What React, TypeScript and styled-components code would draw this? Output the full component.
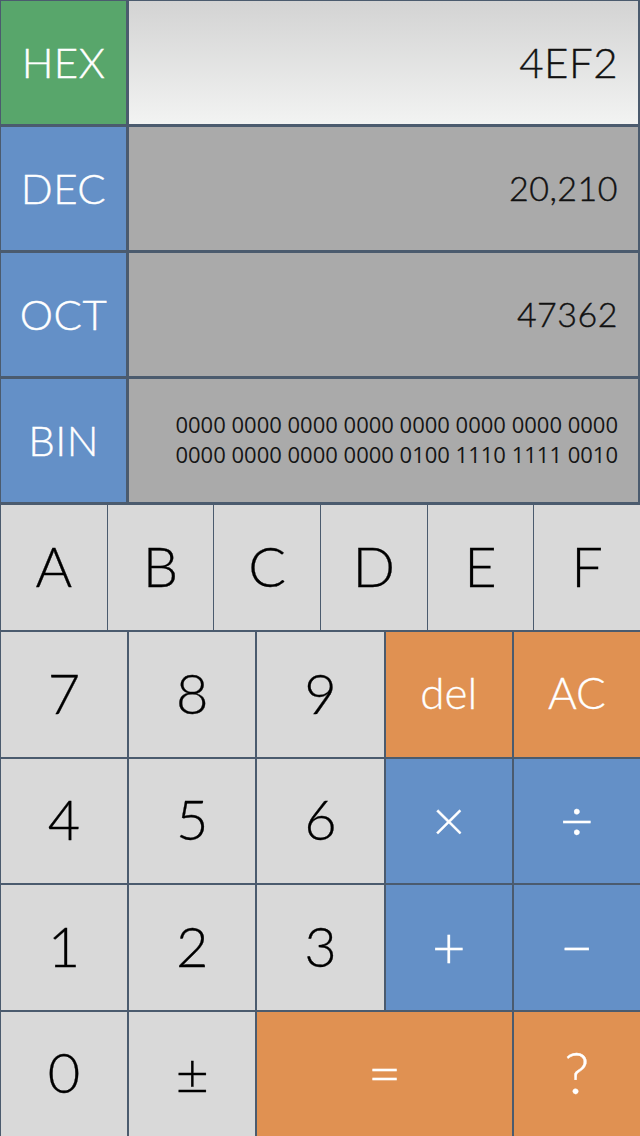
import React from "react";
import styled, { createGlobalStyle } from "styled-components";

const colors = {
  line: "#4b5b6e",
  green: "#58a66b",
  blue: "#6490c7",
  orange: "#e09152",
  key: "#d9d9d9",
  value: "#aaaaaa"
};

const GlobalStyle = createGlobalStyle`
  html, body {
    margin: 0;
    padding: 0;
    background: ${colors.line};
  }
  * {
    box-sizing: border-box;
  }
`;

type Tone = "key" | "orange" | "blue";
type Size = "digit" | "word" | "symbol";

interface KeyDef {
  label: string;
  tone: Tone;
  size: Size;
  span?: number;
}

const displays = [
  { name: "HEX", value: "4EF2", active: true },
  { name: "DEC", value: "20,210" },
  { name: "OCT", value: "47362" }
];

const hexKeys = ["A", "B", "C", "D", "E", "F"];

const padKeys: KeyDef[] = [
  { label: "7", tone: "key", size: "digit" },
  { label: "8", tone: "key", size: "digit" },
  { label: "9", tone: "key", size: "digit" },
  { label: "del", tone: "orange", size: "word" },
  { label: "AC", tone: "orange", size: "word" },
  { label: "4", tone: "key", size: "digit" },
  { label: "5", tone: "key", size: "digit" },
  { label: "6", tone: "key", size: "digit" },
  { label: "×", tone: "blue", size: "symbol" },
  { label: "÷", tone: "blue", size: "symbol" },
  { label: "1", tone: "key", size: "digit" },
  { label: "2", tone: "key", size: "digit" },
  { label: "3", tone: "key", size: "digit" },
  { label: "+", tone: "blue", size: "symbol" },
  { label: "−", tone: "blue", size: "symbol" },
  { label: "0", tone: "key", size: "digit" },
  { label: "±", tone: "key", size: "symbol" },
  { label: "=", tone: "orange", size: "symbol", span: 2 },
  { label: "?", tone: "orange", size: "symbol" }
];

export default function App() {
  return (
    <>
      <GlobalStyle />
      <Screen>
        <Display>
          {displays.map((d) => (
            <React.Fragment key={d.name}>
              <BaseLabel active={!!d.active}>{d.name}</BaseLabel>
              <ValueCell active={!!d.active}>
                <Value big={!!d.active}>{d.value}</Value>
              </ValueCell>
            </React.Fragment>
          ))}
          <BaseLabel active={false}>BIN</BaseLabel>
          <ValueCell active={false}>
            <Binary>
              0000 0000 0000 0000 0000 0000 0000 0000
              <br />
              0000 0000 0000 0000 0100 1110 1111 0010
            </Binary>
          </ValueCell>
        </Display>
        <Keypad>
          <HexRow>
            {hexKeys.map((k) => (
              <Key key={k} tone="key" size="digit">
                {k}
              </Key>
            ))}
          </HexRow>
          <NumberGrid>
            {padKeys.map((k) => (
              <Key key={k.label} tone={k.tone} size={k.size} span={k.span}>
                {k.label}
              </Key>
            ))}
          </NumberGrid>
        </Keypad>
      </Screen>
    </>
  );
}

const Screen = styled.div`
  width: 640px;
  height: 1136px;
  display: flex;
  flex-direction: column;
  background: ${colors.line};
  overflow: hidden;
  font-family: Lato, "Open Sans", sans-serif;
`;

const Display = styled.div`
  display: grid;
  grid-template-columns: 125px 1fr;
  grid-template-rows: repeat(4, 123px);
  gap: 3px;
  padding: 1px 2px 3px 1px;
  background: ${colors.line};
`;

const BaseLabel = styled.div<{ active: boolean }>`
  display: flex;
  align-items: center;
  justify-content: center;
  padding-bottom: 2px;
  background: ${(p) => (p.active ? colors.green : colors.blue)};
  color: #ffffff;
  font-size: 42px;
  font-weight: 300;
  letter-spacing: 0.5px;
  -webkit-text-stroke: 0.4px #ffffff;
`;

const ValueCell = styled.div<{ active: boolean }>`
  display: flex;
  align-items: center;
  justify-content: flex-end;
  padding-right: 20px;
  padding-bottom: 2px;
  background: ${(p) =>
    p.active ? "linear-gradient(to bottom, #d3d3d3, #f2f3f2)" : colors.value};
  color: #111111;
`;

const Value = styled.span<{ big: boolean }>`
  font-size: ${(p) => (p.big ? "42px" : "34px")};
  font-weight: 300;
  letter-spacing: 0.5px;
  -webkit-text-stroke: 0.4px #111111;
`;

const Binary = styled.div`
  font-family: "Open Sans", "Noto Sans", sans-serif;
  font-size: 22px;
  line-height: 30px;
  text-align: right;
  color: #151515;
  margin-top: -2px;
`;

const Keypad = styled.div`
  flex: 1;
  display: flex;
  flex-direction: column;
  gap: 2px;
  padding: 0 0 0 1px;
`;

const HexRow = styled.div`
  height: 125px;
  display: grid;
  grid-template-columns: repeat(6, 1fr);
  gap: 1px;
`;

const NumberGrid = styled.div`
  flex: 1;
  display: grid;
  grid-template-columns: repeat(5, 1fr);
  grid-template-rows: repeat(4, 1fr);
  gap: 2px;
`;

const toneBg: Record<Tone, string> = {
  key: colors.key,
  orange: colors.orange,
  blue: colors.blue
};

const sizes: Record<Size, string> = {
  digit: "56px",
  word: "44px",
  symbol: "58px"
};

const Key = styled.div<{ tone: Tone; size: Size; span?: number }>`
  grid-column: span ${(p) => p.span ?? 1};
  display: flex;
  align-items: center;
  justify-content: center;
  padding-bottom: 4px;
  background: ${(p) => toneBg[p.tone]};
  color: ${(p) => (p.tone === "key" ? "#000000" : "#ffffff")};
  font-size: ${(p) => sizes[p.size]};
  font-weight: 300;
  -webkit-text-stroke: 0.3px ${(p) => (p.tone === "key" ? "#000000" : "#ffffff")};
`;
